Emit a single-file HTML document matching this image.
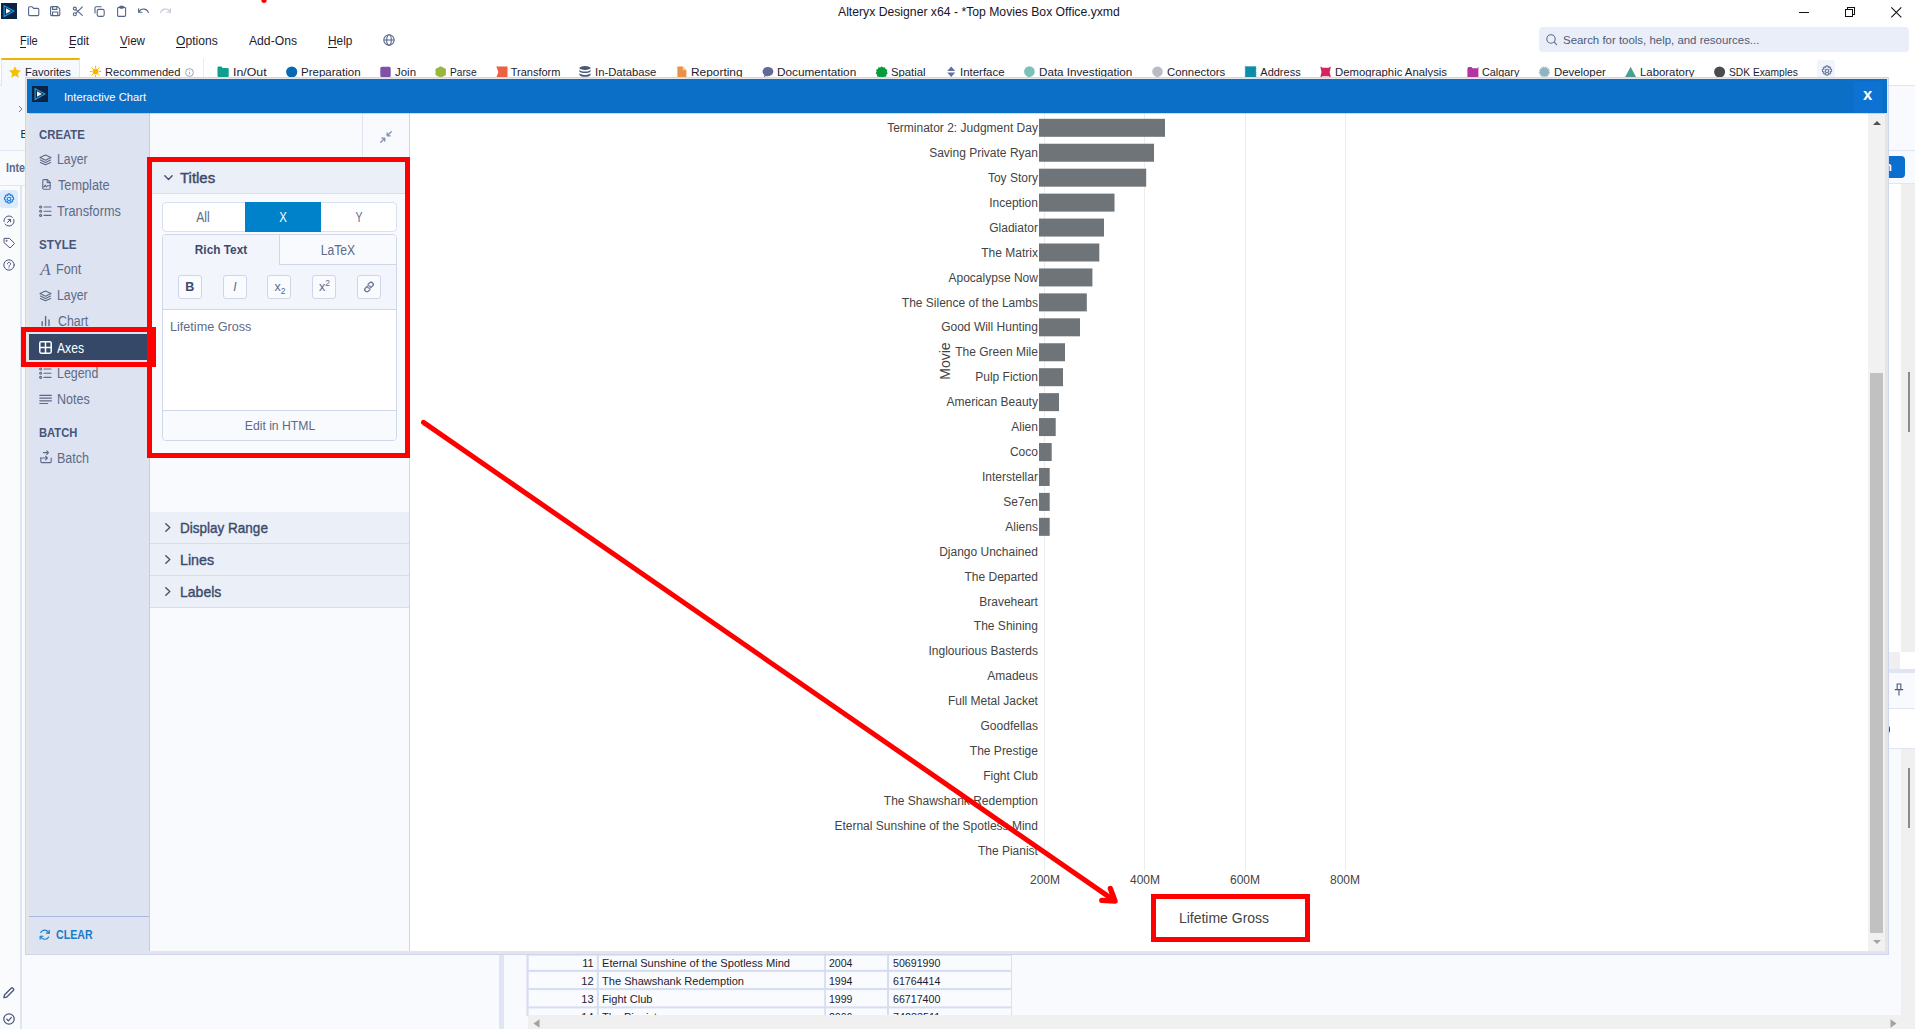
<!DOCTYPE html>
<html lang="en"><head><meta charset="utf-8"><title>Alteryx Designer x64 - Top Movies Box Office.yxmd</title>
<style>
html,body{margin:0;padding:0}
body{width:1915px;height:1029px;overflow:hidden;position:relative;background:#fff;font-family:"Liberation Sans",sans-serif;}
.a{position:absolute;box-sizing:border-box}
.t{position:absolute;white-space:nowrap;line-height:20px;height:20px}
svg{position:absolute;overflow:visible}

</style></head>
<body>
<svg style="left:1px;top:3px" width="16" height="16" viewBox="0 0 16 16"><rect width="16" height="16" fill="#0b2344"/><path d="M3.1 2.7 L12.8 8 L3.1 13.5 Z" fill="none" stroke="#19a0e8" stroke-width="1.15" stroke-linejoin="miter"/><path d="M5 5.3 L9.9 8 L5 10.8 Z" fill="#fff"/></svg>
<svg style="left:28px;top:6px" width="12" height="12" viewBox="0 0 12 12" fill="none" stroke="#54648a" stroke-width="1.1" stroke-linecap="round" stroke-linejoin="round" ><path d="M0.6 1.8 a1 1 0 0 1 1-1 h2.6 l1.4 1.6 h4.2 a1 1 0 0 1 1 1 v5.2 a1 1 0 0 1-1 1 h-8.2 a1 1 0 0 1-1-1 z"/></svg>
<svg style="left:50px;top:6px" width="11" height="12" viewBox="0 0 11 12" fill="none" stroke="#54648a" stroke-width="1.1" stroke-linecap="round" stroke-linejoin="round" ><path d="M0.6 1.6 a1 1 0 0 1 1-1 h6 l2.2 2.2 v5.8 a1 1 0 0 1-1 1 h-7.2 a1 1 0 0 1-1-1 z"/><path d="M2.6 0.8 v2.6 h4.2 v-2.6"/><path d="M2.6 9.4 v-3.4 h5.2 v3.4"/></svg>
<svg style="left:73px;top:6px" width="11" height="11" viewBox="0 0 11 11" fill="none" stroke="#54648a" stroke-width="1.1" stroke-linecap="round" stroke-linejoin="round" ><circle cx="1.8" cy="8.2" r="1.5"/><circle cx="1.8" cy="2.6" r="1.5"/><path d="M3 3.6 L9.4 9.4 M3 7.2 L9.4 0.8"/></svg>
<svg style="left:94px;top:6px" width="12" height="12" viewBox="0 0 12 12" fill="none" stroke="#54648a" stroke-width="1.1" stroke-linecap="round" stroke-linejoin="round" ><rect x="3.2" y="3.4" width="7" height="7" rx="1.6"/><path d="M1 7 v-5.2 a1 1 0 0 1 1-1 h5.2"/></svg>
<svg style="left:117px;top:6px" width="10" height="12" viewBox="0 0 10 12" fill="none" stroke="#54648a" stroke-width="1.1" stroke-linecap="round" stroke-linejoin="round" ><rect x="0.6" y="1.4" width="8" height="9" rx="1.2"/><rect x="2.8" y="0.4" width="3.6" height="1.8" rx="0.6"/></svg>
<svg style="left:138px;top:8px" width="11" height="8" viewBox="0 0 11 8" fill="none" stroke="#54648a" stroke-width="1.1" stroke-linecap="round" stroke-linejoin="round" ><path d="M0.6 0.8 v3.4 h3.4"/><path d="M0.8 4 a5.2 5.2 0 0 1 9.6 0.6"/></svg>
<svg style="left:160px;top:8px" width="11" height="8" viewBox="0 0 11 8" fill="none" stroke="#c4cad6" stroke-width="1.1" stroke-linecap="round" stroke-linejoin="round" ><path d="M10.4 0.8 v3.4 h-3.4"/><path d="M10.2 4 a5.2 5.2 0 0 0 -9.6 0.6"/></svg>
<span class="t" style="font-size:13px;transform:scaleX(0.9383);transform-origin:left center;top:1.60px;color:#16162a;left:838.20px;">Alteryx Designer x64 - *Top Movies Box Office.yxmd</span>
<svg style="left:1799px;top:12px" width="11" height="2" viewBox="0 0 11 2"><path d="M0 0.5h10" stroke="#111" stroke-width="1"/></svg>
<svg style="left:1845px;top:7px" width="12" height="12" viewBox="0 0 12 12" fill="none" stroke="#111" stroke-width="1" shape-rendering="crispEdges"><rect x="0.5" y="2.5" width="7" height="7"/><path d="M2.5 2.5 V0.5 H9.5 V7.5 H7.5"/></svg>
<svg style="left:1891px;top:7px" width="11" height="11" viewBox="0 0 11 11" fill="none" stroke="#111" stroke-width="1.1"><path d="M0.3 0.3 L10.3 10.3 M10.3 0.3 L0.3 10.3"/></svg>
<span class="t" style="font-size:13px;transform:scaleX(0.8447);transform-origin:left center;top:31.00px;color:#1c1c30;left:20.20px;">File</span>
<span class="t" style="font-size:13px;transform:scaleX(0.8926);transform-origin:left center;top:31.00px;color:#1c1c30;left:69.00px;">Edit</span>
<span class="t" style="font-size:13px;transform:scaleX(0.8944);transform-origin:left center;top:31.00px;color:#1c1c30;left:120.00px;">View</span>
<span class="t" style="font-size:13px;transform:scaleX(0.9305);transform-origin:left center;top:31.00px;color:#1c1c30;left:176.20px;">Options</span>
<span class="t" style="font-size:13px;transform:scaleX(0.9354);transform-origin:left center;top:31.00px;color:#1c1c30;left:249.00px;">Add-Ons</span>
<span class="t" style="font-size:13px;transform:scaleX(0.9121);transform-origin:left center;top:31.00px;color:#1c1c30;left:328.00px;">Help</span>
<div class="a" style="left:20.2px;top:46.5px;width:5.6px;height:1px;background:#1c1c30;"></div>
<div class="a" style="left:69px;top:46.5px;width:6px;height:1px;background:#1c1c30;"></div>
<div class="a" style="left:120px;top:46.5px;width:7px;height:1px;background:#1c1c30;"></div>
<div class="a" style="left:176.2px;top:46.5px;width:9px;height:1px;background:#1c1c30;"></div>
<div class="a" style="left:328px;top:46.5px;width:8.8px;height:1px;background:#1c1c30;"></div>
<svg style="left:383px;top:34px" width="12" height="12" viewBox="0 0 12 12" fill="none" stroke="#5b6a8c" stroke-width="1.1"><circle cx="6" cy="6" r="5.2"/><ellipse cx="6" cy="6" rx="2.3" ry="5.2"/><path d="M0.8 6h10.4"/></svg>
<div class="a" style="left:1539px;top:27px;width:370px;height:25px;background:#eaeef8;border-radius:4px;"></div>
<svg style="left:1546px;top:34px" width="12" height="12" viewBox="0 0 12 12" fill="none" stroke="#5b6a8c" stroke-width="1.1" stroke-linecap="round"><circle cx="5" cy="5" r="4.2"/><path d="M8.2 8.2 L10.6 10.6"/></svg>
<span class="t" style="font-size:11.5px;transform:scaleX(0.9943);transform-origin:left center;top:29.80px;color:#4d5a78;left:1563.00px;">Search for tools, help, and resources...</span>
<div class="a" style="left:1px;top:58px;width:79px;height:22px;background:#f5f8fd;border-top:2px solid #f0b400;border-left:1px solid #dfe5f3;border-right:1px solid #dfe5f3;"></div>
<div class="a" style="left:203px;top:58px;width:1px;height:22px;background:#e8ecf5;"></div>
<span class="t" style="font-size:11px;transform:scaleX(1.0144);transform-origin:left center;top:62.00px;color:#1c1c30;left:25.00px;">Favorites</span>
<span class="t" style="font-size:11px;transform:scaleX(1.0121);transform-origin:left center;top:62.00px;color:#1c1c30;left:105.00px;">Recommended</span>
<span class="t" style="font-size:11px;transform:scaleX(1.1245);transform-origin:left center;top:62.00px;color:#1c1c30;left:233.00px;">In/Out</span>
<span class="t" style="font-size:11px;transform:scaleX(1.0479);transform-origin:left center;top:62.00px;color:#1c1c30;left:301.00px;">Preparation</span>
<span class="t" style="font-size:11px;transform:scaleX(1.0402);transform-origin:left center;top:62.00px;color:#1c1c30;left:395.00px;">Join</span>
<span class="t" style="font-size:11px;transform:scaleX(0.9252);transform-origin:left center;top:62.00px;color:#1c1c30;left:450.00px;">Parse</span>
<span class="t" style="font-size:11px;top:62.00px;color:#1c1c30;left:510.70px;">Transform</span>
<span class="t" style="font-size:11px;transform:scaleX(1.0244);transform-origin:left center;top:62.00px;color:#1c1c30;left:595.30px;">In-Database</span>
<span class="t" style="font-size:11px;transform:scaleX(1.0817);transform-origin:left center;top:62.00px;color:#1c1c30;left:691.00px;">Reporting</span>
<span class="t" style="font-size:11px;transform:scaleX(1.0703);transform-origin:left center;top:62.00px;color:#1c1c30;left:777.40px;">Documentation</span>
<span class="t" style="font-size:11px;transform:scaleX(1.0255);transform-origin:left center;top:62.00px;color:#1c1c30;left:891.30px;">Spatial</span>
<span class="t" style="font-size:11px;transform:scaleX(1.0418);transform-origin:left center;top:62.00px;color:#1c1c30;left:960.00px;">Interface</span>
<span class="t" style="font-size:11px;transform:scaleX(1.0583);transform-origin:left center;top:62.00px;color:#1c1c30;left:1039.40px;">Data Investigation</span>
<span class="t" style="font-size:11px;transform:scaleX(1.0344);transform-origin:left center;top:62.00px;color:#1c1c30;left:1167.40px;">Connectors</span>
<span class="t" style="font-size:11px;top:62.00px;color:#1c1c30;left:1260.30px;">Address</span>
<span class="t" style="font-size:11px;transform:scaleX(1.0290);transform-origin:left center;top:62.00px;color:#1c1c30;left:1335.40px;">Demographic Analysis</span>
<span class="t" style="font-size:11px;transform:scaleX(0.9866);transform-origin:left center;top:62.00px;color:#1c1c30;left:1482.30px;">Calgary</span>
<span class="t" style="font-size:11px;transform:scaleX(1.0331);transform-origin:left center;top:62.00px;color:#1c1c30;left:1554.20px;">Developer</span>
<span class="t" style="font-size:11px;transform:scaleX(1.0343);transform-origin:left center;top:62.00px;color:#1c1c30;left:1640.40px;">Laboratory</span>
<span class="t" style="font-size:11px;transform:scaleX(0.9313);transform-origin:left center;top:62.00px;color:#1c1c30;left:1729.30px;">SDK Examples</span>
<svg style="left:9.1px;top:66px" width="12" height="12" viewBox="0 0 12 12"><path d="M6 0.3 L7.8 4.1 L11.9 4.6 L8.9 7.5 L9.7 11.7 L6 9.6 L2.3 11.7 L3.1 7.5 L0.1 4.6 L4.2 4.1 Z" fill="#f7bf04"/></svg>
<svg style="left:89.5px;top:66px" width="11" height="11" viewBox="0 0 11 11"><circle cx="5.5" cy="5.5" r="3" fill="#f7b500"/><g stroke="#f7b500" stroke-width="1" stroke-linecap="round"><path d="M5.5 0.2v1.2M5.5 9.6v1.2M0.2 5.5h1.2M9.6 5.5h1.2M1.8 1.8l0.8 0.8M8.4 8.4l0.8 0.8M1.8 9.2l0.8-0.8M8.4 2.6l0.8-0.8"/></g></svg>
<svg style="left:185px;top:68px" width="9" height="9" viewBox="0 0 9 9"><circle cx="4.5" cy="4.5" r="3.9" fill="none" stroke="#8e99b3" stroke-width="0.9"/><path d="M4.5 4v2.4M4.5 2.4v0.6" stroke="#8e99b3" stroke-width="0.9"/></svg>
<svg style="left:217px;top:66px" width="12" height="12" viewBox="0 0 12 12"><path d="M0.5 1.5 a1 1 0 0 1 1-1 h3 l1.2 1.5 h5 a1 1 0 0 1 1 1 v7 a1 1 0 0 1-1 1 h-9.2 a1 1 0 0 1-1-1z" fill="#0e9f8e"/></svg>
<svg style="left:286px;top:66px" width="12" height="12" viewBox="0 0 12 12"><circle cx="5.7" cy="6" r="5.6" fill="#0869b3"/></svg>
<svg style="left:380px;top:66px" width="11" height="12" viewBox="0 0 11 12"><rect x="0.3" y="0.8" width="10.4" height="10.4" rx="1.6" fill="#7f52a8"/></svg>
<svg style="left:434.5px;top:66px" width="12" height="12" viewBox="0 0 12 12"><path d="M5.7 0.3 L10.9 3.1 V8.9 L5.7 11.7 L0.5 8.9 V3.1 Z" fill="#97b83c"/></svg>
<svg style="left:495.5px;top:66px" width="12" height="12" viewBox="0 0 12 12"><path d="M0.3 0.6 H11.5 V11.4 H0.3 L2.4 6 Z" fill="#ec6044"/></svg>
<svg style="left:579px;top:66px" width="12" height="12" viewBox="0 0 12 12"><g fill="#4b5878"><ellipse cx="6" cy="2" rx="5.6" ry="1.9"/><path d="M0.4 3.6 v1.6 a5.6 1.9 0 0 0 11.2 0 v-1.6 a5.6 1.9 0 0 1 -11.2 0z"/><path d="M0.4 7 v1.8 a5.6 1.9 0 0 0 11.2 0 v-1.8 a5.6 1.9 0 0 1 -11.2 0z"/></g></svg>
<svg style="left:677px;top:66px" width="10" height="12" viewBox="0 0 10 12"><path d="M0.4 0.5 H5.6 L9.4 4.2 V11.5 H0.4 Z" fill="#e89045"/><path d="M5.6 0.5 V4.2 H9.4 Z" fill="#f7c9a0"/></svg>
<svg style="left:762px;top:66px" width="12" height="12" viewBox="0 0 12 12"><path d="M5.8 1 a5.6 4.6 0 1 1 0 9.2 a6 5 0 0 1 -1.8 -0.3 l-2 1.4 l0.3-2.2 a4.6 4.6 0 0 1 3.5 -8.1z" fill="#5f6b96"/></svg>
<svg style="left:875.5px;top:66px" width="12" height="12" viewBox="0 0 12 12"><path d="M5.7 0.3 l1.4 1.3 l1.9-0.3 l0.5 1.8 l1.8 0.7 l-0.5 1.9 l1 1.6 l-1.4 1.3 l0 1.9 l-1.9 0.3 l-1.1 1.6 l-1.7-0.9 l-1.7 0.9 l-1.1-1.6 l-1.9-0.3 l0-1.9 l-1.4-1.3 l1-1.6 l-0.5-1.9 l1.8-0.7 l0.5-1.8 l1.9 0.3z" fill="#069a3e"/></svg>
<svg style="left:946.5px;top:66px" width="9" height="12" viewBox="0 0 9 12"><path d="M4.2 0.6 L8.2 5 H0.2 Z M0.2 6.6 H8.2 L4.2 11 Z" fill="#636f9c"/></svg>
<svg style="left:1023.7px;top:66px" width="11" height="12" viewBox="0 0 11 12"><circle cx="5.4" cy="5.6" r="5.3" fill="#7cc0bb"/><circle cx="5" cy="10" r="1.6" fill="#7cc0bb"/></svg>
<svg style="left:1152px;top:66px" width="11" height="12" viewBox="0 0 11 12"><path d="M5.5 0.5 l2.4 0.6 l2 1.6 l0.9 2.4 l-0.4 2.6 l-1.6 2 l-2.4 1.2 h-1.8 l-2.4-1.2 l-1.6-2 l-0.4-2.6 l0.9-2.4 l2-1.6z" fill="#b9bcc2"/></svg>
<svg style="left:1245px;top:66px" width="11" height="12" viewBox="0 0 11 12"><rect x="0.3" y="0.6" width="10.6" height="10.8" fill="#0b8ea8" stroke="#0b8ea8" stroke-width="0.8" stroke-dasharray="1.2 0.8"/></svg>
<svg style="left:1320px;top:66px" width="11" height="12" viewBox="0 0 11 12"><path d="M0.3 0.6 l2.4 1.2 h5.8 l2.4-1.2 l-1.2 5.4 l1.2 5.4 l-2.4-1.2 h-5.8 l-2.4 1.2 l1.2-5.4z" fill="#d62463"/></svg>
<svg style="left:1466.7px;top:66px" width="12" height="12" viewBox="0 0 12 12"><path d="M0.4 2.6 l1-1.6 h3.2 l1 1.2 h4.6 l1.2-1.4 v10.6 h-11z" fill="#b435a0"/></svg>
<svg style="left:1539px;top:66px" width="11" height="12" viewBox="0 0 11 12"><circle cx="5.4" cy="6" r="4.6" fill="#8fb4bd"/><circle cx="5.4" cy="6" r="5" fill="none" stroke="#8fb4bd" stroke-width="1.2" stroke-dasharray="1 0.8"/></svg>
<svg style="left:1624.8px;top:66px" width="12" height="12" viewBox="0 0 12 12"><path d="M5.6 0.8 L11.2 11.3 H0 Z" fill="#4d9e92"/></svg>
<svg style="left:1713.7px;top:66px" width="12" height="12" viewBox="0 0 12 12"><circle cx="5.6" cy="6" r="5.5" fill="#4b4b4d"/></svg>
<div class="a" style="left:1817.4px;top:60px;width:17.2px;height:22px;background:#f1f4fa;border-radius:3px;"></div>
<svg style="left:1820.6px;top:65.2px" width="12" height="12" viewBox="0 0 24 24" fill="none" stroke="#6f7da3" stroke-width="2.4"><circle cx="12" cy="12" r="3.4"/><path d="M12 1.8 l2 0.4 l0.9 2.6 l2.5-1.1 l1.9 1.9 l-1.1 2.5 l2.6 0.9 l0.4 2 l-0.4 2 l-2.6 0.9 l1.1 2.5 l-1.9 1.9 l-2.5-1.1 l-0.9 2.6 l-2 0.4 l-2-0.4 l-0.9-2.6 l-2.5 1.1 l-1.9-1.9 l1.1-2.5 l-2.6-0.9 l-0.4-2 l0.4-2 l2.6-0.9 l-1.1-2.5 l1.9-1.9 l2.5 1.1 l0.9-2.6z"/></svg>
<div class="a" style="left:0px;top:80px;width:1915px;height:949px;background:#f8fafe;"></div>
<div class="a" style="left:0px;top:80px;width:27px;height:70px;background:#f5f8fd;"></div>
<div class="a" style="left:1px;top:80px;width:1px;height:5.5px;background:#dfe5f3;"></div>
<div class="a" style="left:0px;top:85px;width:2px;height:1px;background:#dfe5f3;"></div>
<div class="a" style="left:0px;top:186px;width:20px;height:843px;background:#fafbfd;"></div>
<svg style="left:18px;top:105px" width="5" height="8" viewBox="0 0 5 8" fill="none" stroke="#6f7da3" stroke-width="1"><path d="M1 1 L4 4 L1 7"/></svg>
<span class="t" style="font-size:10.5px;top:123.60px;color:#1a1a2e;left:20.60px;">B</span>
<div class="a" style="left:0px;top:150px;width:27px;height:1px;background:#dfe5f3;"></div>
<span class="t" style="font-size:12px;font-weight:bold;transform:scaleX(0.8902);transform-origin:left center;top:157.70px;color:#5a6a8c;left:6.40px;">Inte</span>
<div class="a" style="left:0px;top:185px;width:27px;height:1px;background:#dfe5f3;"></div>
<div class="a" style="left:0px;top:190px;width:18px;height:18px;background:#dcebfb;border-radius:3px;"></div>
<svg style="left:3px;top:193px" width="12" height="12" viewBox="0 0 24 24" fill="none" stroke="#1f7fe0" stroke-width="2.2"><circle cx="12" cy="12" r="3.4"/><path d="M12 1.8 l2 0.4 l0.9 2.6 l2.5-1.1 l1.9 1.9 l-1.1 2.5 l2.6 0.9 l0.4 2 l-0.4 2 l-2.6 0.9 l1.1 2.5 l-1.9 1.9 l-2.5-1.1 l-0.9 2.6 l-2 0.4 l-2-0.4 l-0.9-2.6 l-2.5 1.1 l-1.9-1.9 l1.1-2.5 l-2.6-0.9 l-0.4-2 l0.4-2 l2.6-0.9 l-1.1-2.5 l1.9-1.9 l2.5 1.1 l0.9-2.6z"/></svg>
<svg style="left:3px;top:215px" width="12" height="12" viewBox="0 0 12 12" fill="none" stroke="#4a5878" stroke-width="1" stroke-linecap="round"><circle cx="6" cy="6" r="5" stroke-dasharray="12 2.5"/><path d="M4.4 7.6 L7.6 4.4 M5.2 4.4 H7.6 V6.8"/></svg>
<svg style="left:3px;top:237px" width="13" height="12" viewBox="0 0 13 12" fill="none" stroke="#4a5878" stroke-width="1" stroke-linejoin="round"><path d="M1 1.4 H6.4 L11.6 6.4 L7 11 L1 5.6 Z"/><circle cx="3.6" cy="3.8" r="0.6"/></svg>
<svg style="left:3px;top:259px" width="12" height="12" viewBox="0 0 12 12" fill="none" stroke="#4a5878" stroke-width="1" stroke-linecap="round"><circle cx="6" cy="6" r="5.2"/><path d="M4.4 4.8 a1.6 1.6 0 1 1 2.4 1.4 q-0.8 0.4 -0.8 1.2 M6 8.9 v0.2"/></svg>
<div class="a" style="left:20px;top:186px;width:2px;height:843px;background:#dfe5f3;"></div>
<svg style="left:3px;top:987px" width="11.6" height="11.6" viewBox="0 0 13 13" fill="none" stroke="#4a5878" stroke-width="1.5" stroke-linejoin="round"><path d="M1 12 L1.6 9 L9.4 1.2 a1 1 0 0 1 1.4 0 l1 1 a1 1 0 0 1 0 1.4 L4 11.4 Z"/></svg>
<svg style="left:3px;top:1013px" width="12" height="12" viewBox="0 0 12 12" fill="none" stroke="#4a5878" stroke-width="1.25" stroke-linecap="round" stroke-linejoin="round"><circle cx="6" cy="6" r="5.2"/><path d="M3.8 6.2 L5.4 7.8 L8.4 4.4"/></svg>
<div class="a" style="left:499px;top:953px;width:4.7px;height:76px;background:#dfe5f3;"></div>
<svg style="left:0;top:0" width="1915" height="1029" viewBox="0 0 1915 1029"><rect x="526.4" y="954.8" width="485.5" height="61" fill="#d6def1"/><g fill="#fafbfe"><rect x="528.7" y="955.6" width="68.1" height="14.2"/><rect x="598.9" y="955.6" width="225.3" height="14.2"/><rect x="826" y="955.6" width="61.0" height="14.2"/><rect x="889" y="955.6" width="122.0" height="14.2"/><rect x="528.7" y="972" width="68.1" height="16.0"/><rect x="598.9" y="972" width="225.3" height="16.0"/><rect x="826" y="972" width="61.0" height="16.0"/><rect x="889" y="972" width="122.0" height="16.0"/><rect x="528.7" y="990.1" width="68.1" height="16.3"/><rect x="598.9" y="990.1" width="225.3" height="16.3"/><rect x="826" y="990.1" width="61.0" height="16.3"/><rect x="889" y="990.1" width="122.0" height="16.3"/><rect x="528.7" y="1008.4" width="68.1" height="7.6"/><rect x="598.9" y="1008.4" width="225.3" height="7.6"/><rect x="826" y="1008.4" width="61.0" height="7.6"/><rect x="889" y="1008.4" width="122.0" height="7.6"/></g></svg>
<span class="t" style="font-size:11px;top:952.70px;color:#1c1c30;right:1321.40px;">11</span>
<span class="t" style="font-size:11px;transform:scaleX(1.0080);transform-origin:left center;top:952.70px;color:#1c1c30;left:602.00px;">Eternal Sunshine of the Spotless Mind</span>
<span class="t" style="font-size:11px;transform:scaleX(0.9598);transform-origin:left center;top:952.70px;color:#1c1c30;left:829.30px;">2004</span>
<span class="t" style="font-size:11px;transform:scaleX(0.9662);transform-origin:left center;top:952.70px;color:#1c1c30;left:892.50px;">50691990</span>
<span class="t" style="font-size:11px;top:970.80px;color:#1c1c30;right:1321.40px;">12</span>
<span class="t" style="font-size:11px;transform:scaleX(1.0053);transform-origin:left center;top:970.80px;color:#1c1c30;left:602.00px;">The Shawshank Redemption</span>
<span class="t" style="font-size:11px;transform:scaleX(0.9598);transform-origin:left center;top:970.80px;color:#1c1c30;left:829.30px;">1994</span>
<span class="t" style="font-size:11px;transform:scaleX(0.9662);transform-origin:left center;top:970.80px;color:#1c1c30;left:892.50px;">61764414</span>
<span class="t" style="font-size:11px;top:988.90px;color:#1c1c30;right:1321.40px;">13</span>
<span class="t" style="font-size:11px;transform:scaleX(1.0072);transform-origin:left center;top:988.90px;color:#1c1c30;left:602.00px;">Fight Club</span>
<span class="t" style="font-size:11px;transform:scaleX(0.9598);transform-origin:left center;top:988.90px;color:#1c1c30;left:829.30px;">1999</span>
<span class="t" style="font-size:11px;transform:scaleX(0.9662);transform-origin:left center;top:988.90px;color:#1c1c30;left:892.50px;">66717400</span>
<span class="t" style="font-size:11px;top:1007.00px;color:#1c1c30;right:1321.40px;">14</span>
<span class="t" style="font-size:11px;top:1007.00px;color:#1c1c30;left:602.00px;">The Pianist</span>
<span class="t" style="font-size:11px;transform:scaleX(0.9598);transform-origin:left center;top:1007.00px;color:#1c1c30;left:829.30px;">2006</span>
<span class="t" style="font-size:11px;transform:scaleX(0.9829);transform-origin:left center;top:1007.00px;color:#1c1c30;left:892.50px;">74283511</span>
<div class="a" style="left:528px;top:1015.2px;width:1372px;height:14px;background:#f0f0f0;"></div>
<svg style="left:533px;top:1019px" width="7" height="9" viewBox="0 0 7 9"><path d="M6.5 0.3 V8.7 L0.5 4.5 Z" fill="#a3a3a3"/></svg>
<svg style="left:1890px;top:1019px" width="7" height="9" viewBox="0 0 7 9"><path d="M0.5 0.3 V8.7 L6.5 4.5 Z" fill="#a3a3a3"/></svg>
<div class="a" style="left:1888px;top:80px;width:27px;height:5px;background:#fff;"></div>
<div class="a" style="left:1888px;top:85px;width:27px;height:1px;background:#dfe5f3;"></div>
<div class="a" style="left:1888px;top:150px;width:27px;height:1px;background:#dfe5f3;"></div>
<div class="a" style="left:1886px;top:156px;width:19px;height:22px;background:#0b6fd0;border-radius:0 4px 4px 0;"></div>
<span class="t" style="font-size:12px;font-weight:bold;top:156.50px;color:#fff;left:1884.60px;">n</span>
<div class="a" style="left:1888px;top:183px;width:27px;height:1px;background:#dfe5f3;"></div>
<div class="a" style="left:1888px;top:184px;width:13px;height:468px;background:#fff;"></div>
<div class="a" style="left:1901px;top:184px;width:14px;height:468px;background:#efefef;"></div>
<div class="a" style="left:1888px;top:652px;width:12px;height:17px;background:#efefef;"></div>
<div class="a" style="left:1900px;top:652px;width:15px;height:17px;background:#fff;"></div>
<div class="a" style="left:1888px;top:669px;width:27px;height:3.5px;background:#dfe5f3;"></div>
<svg style="left:1894px;top:683px" width="10" height="14" viewBox="0 0 10 14" fill="none" stroke="#4a5878" stroke-width="1.1"><path d="M2.6 1 H7.4 M3.2 1 V6 M6.8 1 V6 M0.8 6.6 H9.2 M5 6.6 V12.6"/></svg>
<div class="a" style="left:1888px;top:708px;width:27px;height:1px;background:#dfe5f3;"></div>
<div class="a" style="left:1888px;top:709px;width:27px;height:39px;background:#fff;"></div>
<div class="a" style="left:1888px;top:726px;width:2px;height:7px;background:#3a4a78;border-radius:0 2px 2px 0;"></div>
<div class="a" style="left:1888px;top:748px;width:27px;height:1px;background:#dfe5f3;"></div>
<div class="a" style="left:1900.5px;top:749px;width:14.5px;height:280px;background:#f0f0f0;"></div>
<div class="a" style="left:1908px;top:372px;width:2px;height:60px;background:#8a8a8a;"></div>
<div class="a" style="left:1908px;top:768px;width:2px;height:60px;background:#8a8a8a;"></div>
<div class="a" style="left:1900px;top:1015px;width:15px;height:14px;background:#f0f0f0;"></div>
<div class="a" style="left:25px;top:77px;width:1863.6px;height:877.8px;background:#e4e5e9;border:1px solid #cdd6ec;"></div>
<div class="a" style="left:27px;top:79px;width:1860px;height:34px;background:#0b6fc7;"></div>
<div class="a" style="left:1853.6px;top:82px;width:28.2px;height:31px;background:#0d72d2;"></div>
<svg style="left:32px;top:86px" width="16" height="16" viewBox="0 0 16 16"><rect width="16" height="16" fill="#0b2344"/><path d="M3.1 2.7 L12.8 8 L3.1 13.5 Z" fill="none" stroke="#19a0e8" stroke-width="1.15"/><path d="M5 5.3 L9.9 8 L5 10.8 Z" fill="#fff"/></svg>
<span class="t" style="font-size:11.5px;transform:scaleX(0.9719);transform-origin:left center;top:86.60px;color:#fff;left:64.00px;">Interactive Chart</span>
<span class="t" style="font-size:16px;font-weight:bold;transform:scaleX(1.0442);transform-origin:left center;top:85.40px;color:#fff;left:1862.80px;">x</span>
<div class="a" style="left:29px;top:113px;width:121px;height:838px;background:#dde3f0;"></div>
<div class="a" style="left:149px;top:113px;width:1px;height:838px;background:#c5cde2;"></div>
<span class="t" style="font-size:12px;font-weight:bold;transform:scaleX(0.9473);transform-origin:left center;top:125.10px;color:#46557a;left:39.40px;">CREATE</span>
<span class="t" style="font-size:12px;font-weight:bold;transform:scaleX(0.9723);transform-origin:left center;top:235.30px;color:#46557a;left:39.40px;">STYLE</span>
<span class="t" style="font-size:12px;font-weight:bold;transform:scaleX(0.9317);transform-origin:left center;top:423.40px;color:#46557a;left:39.40px;">BATCH</span>
<span class="t" style="font-size:14px;transform:scaleX(0.8764);transform-origin:left center;top:149.00px;color:#5d6a88;left:57.30px;">Layer</span>
<span class="t" style="font-size:14px;transform:scaleX(0.9083);transform-origin:left center;top:175.10px;color:#5d6a88;left:58.40px;">Template</span>
<span class="t" style="font-size:14px;transform:scaleX(0.9092);transform-origin:left center;top:201.00px;color:#5d6a88;left:57.30px;">Transforms</span>
<span class="t" style="font-size:14px;transform:scaleX(0.9031);transform-origin:left center;top:258.90px;color:#5d6a88;left:56.00px;">Font</span>
<span class="t" style="font-size:14px;transform:scaleX(0.8764);transform-origin:left center;top:285.40px;color:#5d6a88;left:57.30px;">Layer</span>
<span class="t" style="font-size:14px;transform:scaleX(0.8851);transform-origin:left center;top:311.30px;color:#5d6a88;left:58.40px;">Chart</span>
<span class="t" style="font-size:14px;transform:scaleX(0.8840);transform-origin:left center;top:363.40px;color:#5d6a88;left:57.30px;">Legend</span>
<span class="t" style="font-size:14px;transform:scaleX(0.8940);transform-origin:left center;top:389.20px;color:#5d6a88;left:57.30px;">Notes</span>
<span class="t" style="font-size:14px;transform:scaleX(0.8963);transform-origin:left center;top:447.60px;color:#5d6a88;left:57.30px;">Batch</span>
<div class="a" style="left:29px;top:334px;width:119px;height:26px;background:#354868;"></div>
<span class="t" style="font-size:14px;transform:scaleX(0.8675);transform-origin:left center;top:337.70px;color:#fff;left:57.30px;">Axes</span>
<svg style="left:38.6px;top:153.8px" width="13" height="13" viewBox="0 0 13 13" fill="none" stroke="#5d6a88" stroke-width="1.1" stroke-linecap="round" stroke-linejoin="round"><path d="M6.5 1 L12 3.6 L6.5 6.2 L1 3.6 Z"/><path d="M1.4 6 L6.5 8.4 L11.6 6"/><path d="M1.4 8.4 L6.5 10.8 L11.6 8.4"/></svg>
<svg style="left:42px;top:179.2px" width="9" height="11" viewBox="0 0 9 11" fill="none" stroke="#5d6a88" stroke-width="1.1" stroke-linecap="round" stroke-linejoin="round"><path d="M0.8 1.6 a1 1 0 0 1 1-1 h3.6 l2.8 2.8 v5.8 a1 1 0 0 1-1 1 h-5.4 a1 1 0 0 1-1-1z"/><path d="M5.2 0.8 v2.8 h2.8"/><path d="M1 7.8 h1.2 l1-1.6 l1.2 1.6 l1-1 h2.6"/></svg>
<svg style="left:38.6px;top:205px" width="13" height="13" viewBox="0 0 13 13" fill="none" stroke="#5d6a88" stroke-width="1.1" stroke-linecap="round" stroke-linejoin="round"><circle cx="1.6" cy="2" r="1"/><circle cx="1.6" cy="6.2" r="1"/><circle cx="1.6" cy="10.4" r="1"/><path d="M5 2 H12 M5 6.2 H12 M5 10.4 H12"/></svg>
<span class="t" style="font-size:17px;font-style:italic;font-family:'Liberation Serif',serif;top:259.60px;color:#5d6a88;left:40.20px;">A</span>
<svg style="left:38.6px;top:289.8px" width="13" height="13" viewBox="0 0 13 13" fill="none" stroke="#5d6a88" stroke-width="1.1" stroke-linecap="round" stroke-linejoin="round"><path d="M6.5 1 L12 3.6 L6.5 6.2 L1 3.6 Z"/><path d="M1.4 6 L6.5 8.4 L11.6 6"/><path d="M1.4 8.4 L6.5 10.8 L11.6 8.4"/></svg>
<svg style="left:41.4px;top:315px" width="10" height="12" viewBox="0 0 10 12" fill="none" stroke="#5d6a88" stroke-width="1.4" stroke-linecap="round" stroke-linejoin="round"><path d="M1.2 10.6 V6.8 M4.6 10.6 V1.4 M8 10.6 V5"/></svg>
<svg style="left:39px;top:340.5px" width="13" height="13" viewBox="0 0 13 13" fill="none" stroke="#fff" stroke-width="1.5" stroke-linecap="round" stroke-linejoin="round"><rect x="0.8" y="0.8" width="11.4" height="11.4" rx="1.4"/><path d="M6.5 0.8 V12.2 M0.8 6.5 H12.2"/></svg>
<svg style="left:38.6px;top:367px" width="13" height="13" viewBox="0 0 13 13" fill="none" stroke="#5d6a88" stroke-width="1.1" stroke-linecap="round" stroke-linejoin="round"><circle cx="1.6" cy="2" r="1"/><circle cx="1.6" cy="6.2" r="1"/><circle cx="1.6" cy="10.4" r="1"/><path d="M5 2 H12 M5 6.2 H12 M5 10.4 H12"/></svg>
<svg style="left:38.6px;top:394px" width="13" height="12" viewBox="0 0 13 12" fill="none" stroke="#5d6a88" stroke-width="1.2" stroke-linecap="round" stroke-linejoin="round"><path d="M0.8 1.3 H12.4 M0.8 4.1 H12.4 M0.8 6.8 H12.4 M0.8 9.5 H8.6"/></svg>
<svg style="left:39.6px;top:450.4px" width="12" height="14" viewBox="0 0 12 14" fill="none" stroke="#5d6a88" stroke-width="1.1" stroke-linecap="round" stroke-linejoin="round"><path d="M0.8 8 v3.6 a1 1 0 0 0 1 1 h8.4 a1 1 0 0 0 1 -1 v-3.6"/><path d="M0.8 8 h6.6 m-1.8 -1.8 l1.8 1.8 l-1.8 1.8"/><path d="M3.4 2.6 h5 m-1.6 -1.7 l1.7 1.7 l-1.7 1.7"/></svg>
<div class="a" style="left:29px;top:916px;width:120px;height:1px;background:#a9b9de;"></div>
<svg style="left:39.2px;top:928.7px" width="11.4" height="11.4" viewBox="0 0 12 12" fill="none" stroke="#1a7bc6" stroke-width="1.2" stroke-linecap="round" stroke-linejoin="round"><path d="M10.8 1.4 v3 h-3"/><path d="M1.2 10.6 v-3 h3"/><path d="M10.4 4.2 a4.8 4.8 0 0 0 -8.6 -0.6"/><path d="M1.6 7.8 a4.8 4.8 0 0 0 8.6 0.6"/></svg>
<span class="t" style="font-size:12px;font-weight:bold;transform:scaleX(0.8853);transform-origin:left center;top:925.30px;color:#1a7bc6;left:56.30px;">CLEAR</span>
<div class="a" style="left:150px;top:113px;width:259.5px;height:838px;background:#f8fafd;"></div>
<div class="a" style="left:409px;top:113px;width:1px;height:838px;background:#cfd6e8;"></div>
<div class="a" style="left:362px;top:113px;width:1px;height:45px;background:#dfe5f3;"></div>
<svg style="left:380px;top:131px" width="12" height="12" viewBox="0 0 12 12" fill="none" stroke="#8390b0" stroke-width="1.3" stroke-linecap="round" stroke-linejoin="round"><path d="M7.2 4.8 L11.2 0.8 M7.2 1.8 V4.8 H10.2"/><path d="M4.8 7.2 L0.8 11.2 M4.8 10.2 V7.2 H1.8"/></svg>
<div class="a" style="left:150px;top:162px;width:259px;height:31.5px;background:#ebeff8;border-bottom:1px solid #d9dfee;"></div>
<svg style="left:164px;top:174.5px" width="9" height="6" viewBox="0 0 9 6" fill="none" stroke="#44536f" stroke-width="1.4" stroke-linecap="round" stroke-linejoin="round"><path d="M0.8 0.8 L4.5 4.6 L8.2 0.8"/></svg>
<span class="t" style="font-size:14.5px;transform:scaleX(1.0290);transform-origin:left center;top:167.90px;color:#3c4a6b;left:180.30px;-webkit-text-stroke:0.4px #3c4a6b;">Titles</span>
<div class="a" style="left:162px;top:202px;width:235px;height:30px;background:#fff;border:1px solid #d9e0ef;border-radius:4px;"></div>
<div class="a" style="left:245px;top:202px;width:76px;height:30px;background:#0082cb;"></div>
<span class="t" style="font-size:14px;transform:scaleX(0.8675);transform-origin:center center;top:206.70px;color:#5d6a88;left:-296.60px;width:1000px;text-align:center;">All</span>
<span class="t" style="font-size:14px;transform:scaleX(0.8134);transform-origin:center center;top:206.70px;color:#fff;left:-217.00px;width:1000px;text-align:center;">X</span>
<span class="t" style="font-size:14px;transform:scaleX(0.7492);transform-origin:center center;top:206.70px;color:#5d6a88;left:-141.20px;width:1000px;text-align:center;">Y</span>
<div class="a" style="left:162px;top:234px;width:235px;height:207px;background:#fff;border:1px solid #cfd7e8;border-radius:4px;"></div>
<div class="a" style="left:163px;top:235px;width:233px;height:30px;background:#f8fafd;border-radius:3px 3px 0 0;"></div>
<div class="a" style="left:163px;top:235px;width:116px;height:30px;background:#f2f5fb;border-radius:3px 0 0 0;"></div>
<div class="a" style="left:279px;top:235px;width:1px;height:30px;background:#cfd7e8;"></div>
<div class="a" style="left:279px;top:264.2px;width:117px;height:1px;background:#cfd7e8;"></div>
<div class="a" style="left:163px;top:265.2px;width:233px;height:45px;background:#f2f5fb;border-bottom:1px solid #cfd7e8;"></div>
<span class="t" style="font-size:13px;font-weight:bold;transform:scaleX(0.9103);transform-origin:center center;top:239.80px;color:#3c4a6b;left:-279.00px;width:1000px;text-align:center;">Rich Text</span>
<span class="t" style="font-size:14px;transform:scaleX(0.8689);transform-origin:center center;top:239.80px;color:#5d6a88;left:-162.00px;width:1000px;text-align:center;">LaTeX</span>
<div class="a" style="left:177.8px;top:275.4px;width:24px;height:23.6px;background:#f9fbfe;border:1px solid #cfd6e8;border-radius:3px;"></div>
<div class="a" style="left:222.7px;top:275.4px;width:24px;height:23.6px;background:#f9fbfe;border:1px solid #cfd6e8;border-radius:3px;"></div>
<div class="a" style="left:267.3px;top:275.4px;width:24px;height:23.6px;background:#f9fbfe;border:1px solid #cfd6e8;border-radius:3px;"></div>
<div class="a" style="left:312px;top:275.4px;width:24px;height:23.6px;background:#f9fbfe;border:1px solid #cfd6e8;border-radius:3px;"></div>
<div class="a" style="left:357px;top:275.4px;width:24px;height:23.6px;background:#f9fbfe;border:1px solid #cfd6e8;border-radius:3px;"></div>
<span class="t" style="font-size:12.5px;font-weight:bold;top:277.00px;color:#3c4a6b;left:-310.20px;width:1000px;text-align:center;">B</span>
<span class="t" style="font-size:12px;font-style:italic;top:277.00px;color:#5d6a88;left:-265.00px;width:1000px;text-align:center;">I</span>
<span class="t" style="font-size:12.5px;top:276.60px;color:#5d6a88;left:-222.40px;width:1000px;text-align:center;">x</span>
<span class="t" style="font-size:8.5px;top:280.80px;color:#5d6a88;left:-217.00px;width:1000px;text-align:center;">2</span>
<span class="t" style="font-size:12.5px;top:277.40px;color:#5d6a88;left:-178.00px;width:1000px;text-align:center;">x</span>
<span class="t" style="font-size:8.5px;top:272.80px;color:#5d6a88;left:-172.40px;width:1000px;text-align:center;">2</span>
<svg style="left:363px;top:281px" width="12" height="12" viewBox="0 0 12 12" fill="none" stroke="#5d6a88" stroke-width="1.2" stroke-linecap="round"><path d="M5 3.4 l1.6-1.6 a2.1 2.1 0 0 1 3 3 l-1.8 1.8 a2.1 2.1 0 0 1 -3 0"/><path d="M7 8.6 l-1.6 1.6 a2.1 2.1 0 0 1 -3 -3 l1.8 -1.8 a2.1 2.1 0 0 1 3 0"/></svg>
<span class="t" style="font-size:13.5px;transform:scaleX(0.9341);transform-origin:left center;top:317.00px;color:#5d6a88;left:170.30px;">Lifetime Gross</span>
<div class="a" style="left:163px;top:410px;width:233px;height:1px;background:#cfd7e8;"></div>
<div class="a" style="left:163px;top:411px;width:233px;height:29px;background:#f8fafd;border-radius:0 0 3px 3px;"></div>
<span class="t" style="font-size:13.5px;transform:scaleX(0.9035);transform-origin:center center;top:416.00px;color:#5d6a88;left:-220.30px;width:1000px;text-align:center;">Edit in HTML</span>
<div class="a" style="left:150px;top:512px;width:259px;height:32px;background:#ebeff8;border-bottom:1px solid #d5dcec;"></div>
<svg style="left:165px;top:523.2px" width="6" height="9" viewBox="0 0 6 9" fill="none" stroke="#44536f" stroke-width="1.4" stroke-linecap="round" stroke-linejoin="round"><path d="M0.8 0.8 L4.8 4.5 L0.8 8.2"/></svg>
<span class="t" style="font-size:15px;transform:scaleX(0.9010);transform-origin:left center;top:518.00px;color:#3c4a6b;left:180.30px;-webkit-text-stroke:0.4px #3c4a6b;">Display Range</span>
<div class="a" style="left:150px;top:544px;width:259px;height:32px;background:#ebeff8;border-bottom:1px solid #d5dcec;"></div>
<svg style="left:165px;top:555.2px" width="6" height="9" viewBox="0 0 6 9" fill="none" stroke="#44536f" stroke-width="1.4" stroke-linecap="round" stroke-linejoin="round"><path d="M0.8 0.8 L4.8 4.5 L0.8 8.2"/></svg>
<span class="t" style="font-size:15px;transform:scaleX(0.9481);transform-origin:left center;top:550.00px;color:#3c4a6b;left:180.30px;-webkit-text-stroke:0.4px #3c4a6b;">Lines</span>
<div class="a" style="left:150px;top:576px;width:259px;height:32px;background:#ebeff8;border-bottom:1px solid #d5dcec;"></div>
<svg style="left:165px;top:587.2px" width="6" height="9" viewBox="0 0 6 9" fill="none" stroke="#44536f" stroke-width="1.4" stroke-linecap="round" stroke-linejoin="round"><path d="M0.8 0.8 L4.8 4.5 L0.8 8.2"/></svg>
<span class="t" style="font-size:15px;transform:scaleX(0.9343);transform-origin:left center;top:582.00px;color:#3c4a6b;left:180.30px;-webkit-text-stroke:0.4px #3c4a6b;">Labels</span>
<div class="a" style="left:410px;top:113px;width:1458.5px;height:838px;background:#fff;"></div>
<div class="a" style="left:1044px;top:113px;width:1px;height:758px;background:#ececec;"></div>
<div class="a" style="left:1144px;top:113px;width:1px;height:758px;background:#ececec;"></div>
<div class="a" style="left:1245px;top:113px;width:1px;height:758px;background:#ececec;"></div>
<div class="a" style="left:1345px;top:113px;width:1px;height:758px;background:#ececec;"></div>
<span class="t" style="font-size:12px;top:118.00px;color:#444;right:877.10px;">Terminator 2: Judgment Day</span>
<span class="t" style="font-size:12px;top:143.00px;color:#444;right:877.10px;">Saving Private Ryan</span>
<span class="t" style="font-size:12px;top:168.00px;color:#444;right:877.10px;">Toy Story</span>
<span class="t" style="font-size:12px;top:193.00px;color:#444;right:877.10px;">Inception</span>
<span class="t" style="font-size:12px;top:218.00px;color:#444;right:877.10px;">Gladiator</span>
<span class="t" style="font-size:12px;top:243.00px;color:#444;right:877.10px;">The Matrix</span>
<span class="t" style="font-size:12px;top:268.00px;color:#444;right:877.10px;">Apocalypse Now</span>
<span class="t" style="font-size:12px;top:293.00px;color:#444;right:877.10px;">The Silence of the Lambs</span>
<span class="t" style="font-size:12px;top:317.00px;color:#444;right:877.10px;">Good Will Hunting</span>
<span class="t" style="font-size:12px;top:342.00px;color:#444;right:877.10px;">The Green Mile</span>
<span class="t" style="font-size:12px;top:367.00px;color:#444;right:877.10px;">Pulp Fiction</span>
<span class="t" style="font-size:12px;top:392.00px;color:#444;right:877.10px;">American Beauty</span>
<span class="t" style="font-size:12px;top:417.00px;color:#444;right:877.10px;">Alien</span>
<span class="t" style="font-size:12px;top:442.00px;color:#444;right:877.10px;">Coco</span>
<span class="t" style="font-size:12px;top:467.00px;color:#444;right:877.10px;">Interstellar</span>
<span class="t" style="font-size:12px;top:492.00px;color:#444;right:877.10px;">Se7en</span>
<span class="t" style="font-size:12px;top:517.00px;color:#444;right:877.10px;">Aliens</span>
<span class="t" style="font-size:12px;top:542.00px;color:#444;right:877.10px;">Django Unchained</span>
<span class="t" style="font-size:12px;top:567.00px;color:#444;right:877.10px;">The Departed</span>
<span class="t" style="font-size:12px;top:592.00px;color:#444;right:877.10px;">Braveheart</span>
<span class="t" style="font-size:12px;top:616.00px;color:#444;right:877.10px;">The Shining</span>
<span class="t" style="font-size:12px;top:641.00px;color:#444;right:877.10px;">Inglourious Basterds</span>
<span class="t" style="font-size:12px;top:666.00px;color:#444;right:877.10px;">Amadeus</span>
<span class="t" style="font-size:12px;top:691.00px;color:#444;right:877.10px;">Full Metal Jacket</span>
<span class="t" style="font-size:12px;top:716.00px;color:#444;right:877.10px;">Goodfellas</span>
<span class="t" style="font-size:12px;top:741.00px;color:#444;right:877.10px;">The Prestige</span>
<span class="t" style="font-size:12px;top:766.00px;color:#444;right:877.10px;">Fight Club</span>
<span class="t" style="font-size:12px;top:791.00px;color:#444;right:877.10px;">The Shawshank Redemption</span>
<span class="t" style="font-size:12px;top:816.00px;color:#444;right:877.10px;">Eternal Sunshine of the Spotless Mind</span>
<span class="t" style="font-size:12px;top:841.00px;color:#444;right:877.10px;">The Pianist</span>
<svg style="left:0;top:0" width="1915" height="1029" viewBox="0 0 1915 1029" fill="#6f7478"><rect x="1039" y="118.80" width="126.0" height="18"/><rect x="1039" y="143.74" width="115.0" height="18"/><rect x="1039" y="168.68" width="107.2" height="18"/><rect x="1039" y="193.62" width="75.5" height="18"/><rect x="1039" y="218.56" width="65.0" height="18"/><rect x="1039" y="243.50" width="60.3" height="18"/><rect x="1039" y="268.44" width="53.4" height="18"/><rect x="1039" y="293.38" width="47.8" height="18"/><rect x="1039" y="318.32" width="41.0" height="18"/><rect x="1039" y="343.26" width="26.0" height="18"/><rect x="1039" y="368.20" width="24.0" height="18"/><rect x="1039" y="393.14" width="20.0" height="18"/><rect x="1039" y="418.08" width="16.7" height="18"/><rect x="1039" y="443.02" width="12.7" height="18"/><rect x="1039" y="467.96" width="10.7" height="18"/><rect x="1039" y="492.90" width="10.7" height="18"/><rect x="1039" y="517.84" width="10.7" height="18"/></svg>
<span class="t" style="font-size:12px;top:869.80px;color:#444;left:545.00px;width:1000px;text-align:center;">200M</span>
<span class="t" style="font-size:12px;top:869.80px;color:#444;left:645.00px;width:1000px;text-align:center;">400M</span>
<span class="t" style="font-size:12px;top:869.80px;color:#444;left:745.00px;width:1000px;text-align:center;">600M</span>
<span class="t" style="font-size:12px;top:869.80px;color:#444;left:845.00px;width:1000px;text-align:center;">800M</span>
<span class="t" style="font-size:14px;top:351.00px;color:#444;left:444.60px;width:1000px;text-align:center;transform:rotate(-90deg);">Movie</span>
<span class="t" style="font-size:14px;top:908.00px;color:#444;left:724.00px;width:1000px;text-align:center;">Lifetime Gross</span>
<div class="a" style="left:1868px;top:113px;width:17px;height:838px;background:#f1f1f1;"></div>
<div class="a" style="left:1870px;top:373px;width:13px;height:560px;background:#c1c1c1;"></div>
<svg style="left:1873px;top:121px" width="8" height="4" viewBox="0 0 8 4"><path d="M0 4 L4 0 L8 4 Z" fill="#505050"/></svg>
<svg style="left:1873px;top:940px" width="8" height="4" viewBox="0 0 8 4"><path d="M0 0 L4 4 L8 0 Z" fill="#a3a3a3"/></svg>
<div class="a" style="left:29px;top:113px;width:1856px;height:1px;background:rgba(110,120,140,0.28);"></div>
<div class="a" style="left:21px;top:327px;width:135px;height:40px;border:5px solid #fe0000;"></div>
<div class="a" style="left:147px;top:157px;width:263px;height:301px;border:5px solid #fe0000;"></div>
<div class="a" style="left:1151px;top:894px;width:159px;height:47.5px;border:5px solid #fe0000;"></div>
<svg style="left:0;top:0" width="1915" height="1029" viewBox="0 0 1915 1029"><path d="M423.5 422.4 L1113 899.6" stroke="#fe0000" stroke-width="5" fill="none" stroke-linecap="round"/><path d="M1110.4 888.6 L1115 901 L1101.8 900.4" fill="none" stroke="#fe0000" stroke-width="5.4" stroke-linejoin="round" stroke-linecap="round"/><ellipse cx="264" cy="0.5" rx="2.6" ry="2.4" fill="#fe0000"/></svg>
</body></html>
